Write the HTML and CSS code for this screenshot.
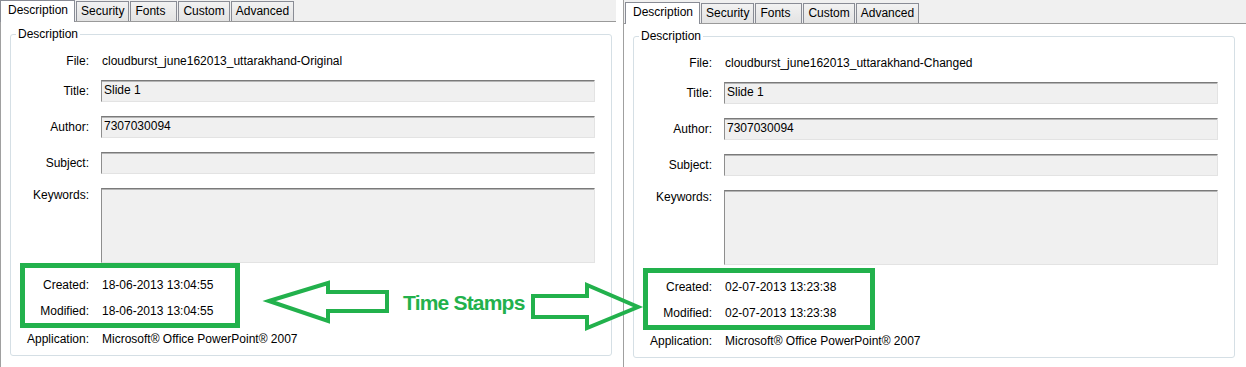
FILE: index.html
```html
<!DOCTYPE html>
<html lang="en">
<head>
<meta charset="utf-8">
<title>Document Properties comparison</title>
<link rel="stylesheet" href="styles.css">
</head>
<body>
<div class="page">
  <section class="panel panel-left">
    <div class="tabs">
      <div class="tab active">Description</div>
      <div class="tab">Security</div>
      <div class="tab">Fonts</div>
      <div class="tab">Custom</div>
      <div class="tab">Advanced</div>
    </div>
    <div class="body">
      <fieldset class="group">
        <legend>Description</legend>
        <div class="row r-file"><span class="lbl">File:</span><span class="val">cloudburst_june162013_uttarakhand-Original</span></div>
        <div class="row r-title"><span class="lbl">Title:</span><div class="input">Slide 1</div></div>
        <div class="row"><span class="lbl">Author:</span><div class="input">7307030094</div></div>
        <div class="row"><span class="lbl">Subject:</span><div class="input"></div></div>
        <div class="row r-kw"><span class="lbl">Keywords:</span><div class="input"></div></div>
        <div class="row r-created"><span class="lbl">Created:</span><span class="val">18-06-2013 13:04:55</span></div>
        <div class="row r-modified"><span class="lbl">Modified:</span><span class="val">18-06-2013 13:04:55</span></div>
        <div class="row r-app"><span class="lbl">Application:</span><span class="val">Microsoft® Office PowerPoint® 2007</span></div>
      </fieldset>
    </div>
  </section>

  <section class="panel panel-right">
    <div class="tabs">
      <div class="tab active">Description</div>
      <div class="tab">Security</div>
      <div class="tab">Fonts</div>
      <div class="tab">Custom</div>
      <div class="tab">Advanced</div>
    </div>
    <div class="body">
      <fieldset class="group">
        <legend>Description</legend>
        <div class="row r-file"><span class="lbl">File:</span><span class="val">cloudburst_june162013_uttarakhand-Changed</span></div>
        <div class="row r-title"><span class="lbl">Title:</span><div class="input">Slide 1</div></div>
        <div class="row"><span class="lbl">Author:</span><div class="input">7307030094</div></div>
        <div class="row"><span class="lbl">Subject:</span><div class="input"></div></div>
        <div class="row r-kw"><span class="lbl">Keywords:</span><div class="input"></div></div>
        <div class="row r-created"><span class="lbl">Created:</span><span class="val">02-07-2013 13:23:38</span></div>
        <div class="row r-modified"><span class="lbl">Modified:</span><span class="val">02-07-2013 13:23:38</span></div>
        <div class="row r-app"><span class="lbl">Application:</span><span class="val">Microsoft® Office PowerPoint® 2007</span></div>
      </fieldset>
    </div>
  </section>

  <svg class="annot" width="1246" height="367" viewBox="0 0 1246 367" aria-hidden="true">
    <rect x="22.5" y="265.5" width="215" height="60" fill="none" stroke="#22b14c" stroke-width="5"/>
    <rect x="645.5" y="270.5" width="227" height="57" fill="none" stroke="#22b14c" stroke-width="5"/>
    <polygon points="269,301 328,283 328,292 387,292 387,311 328,311 328,321" fill="none" stroke="#22b14c" stroke-width="4" stroke-linejoin="miter"/>
    <polygon points="533,296 587,296 587,285 638,307 587,328 587,317 533,317" fill="none" stroke="#22b14c" stroke-width="4" stroke-linejoin="miter"/>
  </svg>
  <div class="caption">Time Stamps</div>
</div>
</body>
</html>
```

FILE: styles.css
```css
html, body {
  margin: 0;
  padding: 0;
  background: #ffffff;
}

body {
  font-family: "Liberation Sans", Arial, sans-serif;
  font-size: 12px;
  color: #000000;
}

.page {
  position: relative;
  width: 1246px;
  height: 367px;
  display: flex;
  align-items: stretch;
  overflow: hidden;
}

.panel {
  display: flex;
  flex-direction: column;
}

.panel-left {
  width: 616px;
  flex: none;
}

.panel-right {
  margin-left: 7px;
  flex: 1;
  border-left: 1px solid #a0a0a0;
}

.tabs {
  display: flex;
  align-items: flex-end;
  height: 21px;
  background: #f0f0f0;
  border-bottom: 1px solid #9a9a9a;
}

.panel-right .tabs {
  padding-top: 2px;
  padding-left: 1px;
}

.tab {
  box-sizing: border-box;
  height: 20px;
  line-height: 18px;
  padding: 0 4px;
  min-width: 47px;
  margin-left: 1px;
  border: 1px solid #898c95;
  border-bottom: 0;
  background: linear-gradient(#f2f2f2, #e3e3e3);
  white-space: nowrap;
}

.tab.active {
  height: 22px;
  margin-bottom: -1px;
  margin-left: 0;
  padding: 1px 6px 0 7px;
  line-height: 16px;
  background: #ffffff;
  position: relative;
}

.body {
  flex: 1;
}

.panel-left .body {
  border-left: 1px solid #a0a0a0;
}

.group {
  margin: 5px 0 0 9px;
  width: 602px;
  box-sizing: border-box;
  border: 1px solid #d5dfe5;
  border-radius: 3px;
  padding: 9px 16px 5px 0;
  min-inline-size: auto;
}

.group legend {
  padding: 0 2px;
  margin-left: 5px;
  line-height: 14px;
}

.row {
  display: flex;
  align-items: center;
  height: 22px;
  margin-top: 14px;
}

.lbl {
  flex: none;
  width: 78px;
  margin-right: 12px;
  text-align: right;
  white-space: nowrap;
}

.val {
  padding-left: 1px;
  white-space: nowrap;
}

.input {
  flex: 1;
  box-sizing: border-box;
  height: 22px;
  padding: 0 2px;
  line-height: 19px;
  background: #f0f0f0;
  border: 1px solid;
  border-color: #7a7a7a #e3e3e3 #e3e3e3 #8e8e8e;
  box-shadow: inset 0 1px 0 #b4b4b4;
  white-space: nowrap;
}

.r-file {
  margin-top: 0;
}

.r-title {
  margin-top: 8px;
}

.r-kw {
  height: 75px;
  align-items: flex-start;
}

.r-kw .lbl {
  line-height: 14px;
}

.r-kw .input {
  height: 75px;
}

.r-created {
  margin-top: 11px;
}

.r-modified {
  margin-top: 4px;
}

.r-app {
  margin-top: 6px;
}

.annot {
  position: absolute;
  left: 0;
  top: 0;
  pointer-events: none;
}

.caption {
  position: absolute;
  left: 403px;
  top: 292px;
  font-family: "Liberation Sans", Arial, sans-serif;
  font-weight: bold;
  font-size: 21px;
  line-height: 21px;
  letter-spacing: -0.8px;
  color: #22b14c;
  white-space: nowrap;
}
```
